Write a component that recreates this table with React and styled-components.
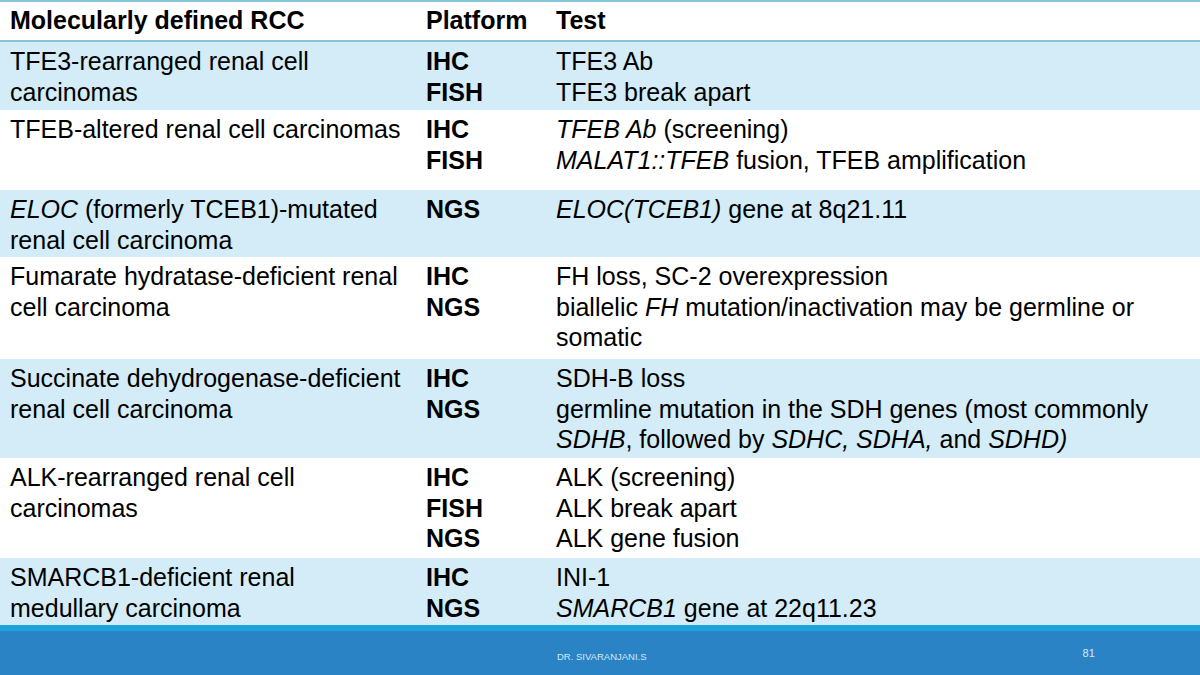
import React from "react";
import styled, { createGlobalStyle } from "styled-components";

const GlobalStyle = createGlobalStyle`
  html, body {
    margin: 0;
    padding: 0;
    background: #ffffff;
  }
`;

const Slide = styled.div`
  width: 1200px;
  height: 675px;
  display: flex;
  flex-direction: column;
  font-family: "Liberation Sans", Arial, sans-serif;
  color: #000;
  overflow: hidden;
`;

const Table = styled.div`
  flex: 1;
  display: flex;
  flex-direction: column;
  border-top: 2px solid #86c4dc;
`;

const Row = styled.div`
  display: grid;
  grid-template-columns: 426px 130px 1fr;
  height: ${(p) => p.$h}px;
  box-sizing: border-box;
  padding-top: ${(p) => (p.$head ? 3 : 4)}px;
  background: ${(p) => (p.$shade ? "#d3ecf7" : "#ffffff")};
  border-bottom: ${(p) => (p.$head ? "2px solid #86c4dc" : "none")};
  font-size: 25px;
  line-height: 30.5px;
`;

const Cell = styled.div`
  padding-left: ${(p) => (p.$first ? 10 : 0)}px;
  font-weight: ${(p) => (p.$bold ? 700 : 400)};
  white-space: nowrap;
`;

const Line = styled.div``;

const Footer = styled.footer`
  height: 52px;
  border-top: 6px solid #1fa3dc;
  background: #2a83c5;
  box-sizing: border-box;
  display: flex;
  align-items: center;
  font-family: "Liberation Sans", Arial, sans-serif;
  color: #d6e8f5;
`;

const Author = styled.span`
  margin-left: 557px;
  font-size: 9.5px;
  padding-top: 6px;
`;

const PageNo = styled.span`
  margin-left: 436px;
  font-size: 11px;
`;

const rows = [
  {
    h: 68,
    shade: true,
    name: ["TFE3-rearranged renal cell", "carcinomas"],
    platform: ["IHC", "FISH"],
    test: ["TFE3 Ab", "TFE3 break apart"],
  },
  {
    h: 80,
    name: ["TFEB-altered renal cell carcinomas"],
    platform: ["IHC", "FISH"],
    test: [
      <>
        <i>TFEB Ab</i> (screening)
      </>,
      <>
        <i>MALAT1::TFEB</i> fusion, TFEB amplification
      </>,
    ],
  },
  {
    h: 67,
    shade: true,
    name: [
      <>
        <i>ELOC</i> (formerly TCEB1)-mutated
      </>,
      "renal cell carcinoma",
    ],
    platform: ["NGS"],
    test: [
      <>
        <i>ELOC(TCEB1)</i> gene at 8q21.11
      </>,
    ],
  },
  {
    h: 102,
    name: ["Fumarate hydratase-deficient renal", "cell carcinoma"],
    platform: ["IHC", "NGS"],
    test: [
      "FH loss, SC-2 overexpression",
      <>
        biallelic <i>FH</i> mutation/inactivation may be germline or
      </>,
      "somatic",
    ],
  },
  {
    h: 99,
    shade: true,
    name: ["Succinate dehydrogenase-deficient", "renal cell carcinoma"],
    platform: ["IHC", "NGS"],
    test: [
      "SDH-B loss",
      "germline mutation in the SDH genes (most commonly",
      <>
        <i>SDHB</i>, followed by <i>SDHC, SDHA,</i> and <i>SDHD)</i>
      </>,
    ],
  },
  {
    h: 100,
    name: ["ALK-rearranged renal cell", "carcinomas"],
    platform: ["IHC", "FISH", "NGS"],
    test: ["ALK (screening)", "ALK break apart", "ALK gene fusion"],
  },
  {
    h: 67,
    shade: true,
    name: ["SMARCB1-deficient renal", "medullary carcinoma"],
    platform: ["IHC", "NGS"],
    test: [
      "INI-1",
      <>
        <i>SMARCB1</i> gene at 22q11.23
      </>,
    ],
  },
];

const Lines = ({ items }) =>
  items.map((t, i) => <Line key={i}>{t}</Line>);

export default function App() {
  return (
    <>
      <GlobalStyle />
      <Slide>
        <Table>
          <Row $head $h={40}>
            <Cell $first $bold>Molecularly defined RCC</Cell>
            <Cell $bold>Platform</Cell>
            <Cell $bold>Test</Cell>
          </Row>
          {rows.map((r, i) => (
            <Row key={i} $h={r.h} $shade={r.shade}>
              <Cell $first>
                <Lines items={r.name} />
              </Cell>
              <Cell $bold>
                <Lines items={r.platform} />
              </Cell>
              <Cell>
                <Lines items={r.test} />
              </Cell>
            </Row>
          ))}
        </Table>
        <Footer>
          <Author>DR. SIVARANJANI.S</Author>
          <PageNo>81</PageNo>
        </Footer>
      </Slide>
    </>
  );
}
